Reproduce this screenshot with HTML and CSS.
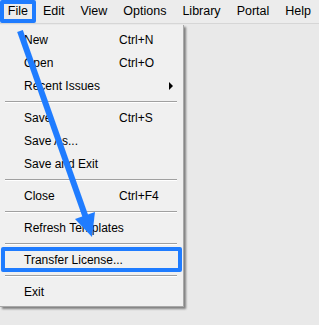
FILE: index.html
```html
<!DOCTYPE html>
<html>
<head>
  <meta charset="UTF-8">
  <link rel="stylesheet" href="styles.css">
</head>
<body>
  <div class="menubar">
    <span class="menu-title highlight">File</span>
    <span class="menu-title">Edit</span>
    <span class="menu-title">View</span>
    <span class="menu-title">Options</span>
    <span class="menu-title">Library</span>
    <span class="menu-title">Portal</span>
    <span class="menu-title">Help</span>
  </div>

  <div class="dropdown">
    <div class="item"><span class="label">New</span><span class="shortcut">Ctrl+N</span></div>
    <div class="item"><span class="label">Open</span><span class="shortcut">Ctrl+O</span></div>
    <div class="item"><span class="label">Recent Issues</span><span class="submenu"></span></div>
    <div class="sep"></div>
    <div class="item"><span class="label">Save</span><span class="shortcut">Ctrl+S</span></div>
    <div class="item"><span class="label">Save As...</span></div>
    <div class="item"><span class="label">Save and Exit</span></div>
    <div class="sep"></div>
    <div class="item"><span class="label">Close</span><span class="shortcut">Ctrl+F4</span></div>
    <div class="sep"></div>
    <div class="item"><span class="label">Refresh Templates</span></div>
    <div class="sep"></div>
    <div class="item boxed"><span class="label">Transfer License...</span></div>
    <div class="sep"></div>
    <div class="item"><span class="label">Exit</span></div>
  </div>

  <!-- pointer arrow drawn over the menu -->
  <svg class="pointer" width="319" height="325" viewBox="0 0 319 325">
    <line x1="20" y1="31" x2="86" y2="218" stroke="#1f7cff" stroke-width="6"/>
    <polygon points="92,237 95,212 75,219" fill="#1f7cff"/>
  </svg>
</body>
</html>
```

FILE: styles.css
```css
body {
  margin: 0;
  width: 319px;
  height: 325px;
  background: #e9e9e9;
  font-family: 'Liberation Sans', Arial, sans-serif;
  font-size: 12px;
  color: #000;
  position: relative;
  overflow: hidden;
}

.menubar {
  display: flex;
  height: 24px;
  background: #ececec;
  border-bottom: 1px solid #d6d6d6;
  box-sizing: border-box;
}

.menu-title {
  display: flex;
  align-items: center;
  padding: 0 8px;
  font-size: 12.5px;
  line-height: 1;
}

.menu-title.highlight {
  border: 4px solid #1f7cff;
  border-radius: 2px;
  width: 37px;
  padding: 0;
  margin-right: -1px;
  box-sizing: border-box;
  justify-content: center;
}

.dropdown {
  position: absolute;
  top: 25px;
  left: 0;
  width: 184px;
  padding: 3px 0;
  background: #f0f0f0;
  box-shadow: 2px 2px 2px rgba(0, 0, 0, 0.45);
  border-right: 1px solid #a8a8a8;
  border-bottom: 1px solid #a8a8a8;
  box-sizing: border-box;
}

.item {
  display: flex;
  align-items: center;
  height: 23px;
  padding-left: 24px;
  box-sizing: border-box;
}

.item .label {
  width: 95px;
  white-space: nowrap;
}

.item .shortcut {
  white-space: nowrap;
}

.submenu {
  width: 0;
  height: 0;
  border-top: 4px solid transparent;
  border-bottom: 4px solid transparent;
  border-left: 4px solid #000;
  margin-left: 50px;
}

.item.boxed {
  margin: -1px 1px;
  padding-left: 19px;
  border: 4px solid #1f7cff;
  border-radius: 2px;
  height: 25px;
}

.sep {
  height: 9px;
  margin: 0 6px 0 5px;
  display: flex;
  flex-direction: column;
  justify-content: center;
}

.sep::before {
  content: '';
  display: block;
  height: 1px;
  background: #a0a0a0;
  border-bottom: 1px solid #ffffff;
}

.pointer {
  position: absolute;
  left: 0;
  top: 0;
  pointer-events: none;
}
```
